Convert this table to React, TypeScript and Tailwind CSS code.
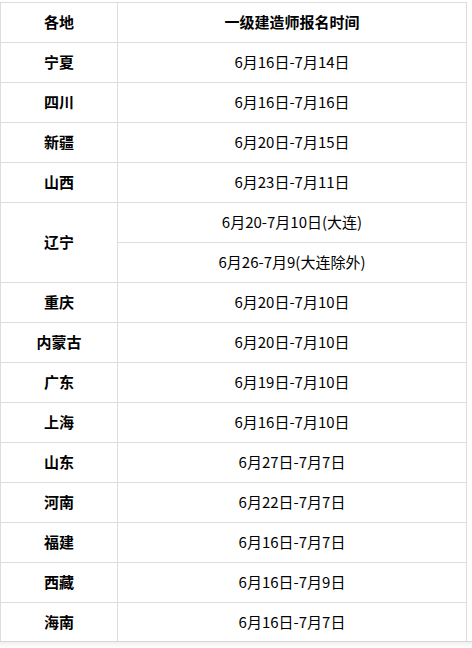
const rows: [string, string[]][] = [
  ['宁夏', ['6月16日-7月14日']],
  ['四川', ['6月16日-7月16日']],
  ['新疆', ['6月20日-7月15日']],
  ['山西', ['6月23日-7月11日']],
  ['辽宁', ['6月20-7月10日(大连)', '6月26-7月9(大连除外)']],
  ['重庆', ['6月20日-7月10日']],
  ['内蒙古', ['6月20日-7月10日']],
  ['广东', ['6月19日-7月10日']],
  ['上海', ['6月16日-7月10日']],
  ['山东', ['6月27日-7月7日']],
  ['河南', ['6月22日-7月7日']],
  ['福建', ['6月16日-7月7日']],
  ['西藏', ['6月16日-7月9日']],
  ['海南', ['6月16日-7月7日']],
];

const cell = 'border border-[#dddddd] text-center align-middle p-0';

export default function App() {
  return (
    <div
      className="w-[472px] h-[648px] overflow-hidden bg-white pt-[2px] text-[15px] text-black"
      style={{ fontFamily: '"Noto Sans CJK SC", "Noto Sans", sans-serif' }}
    >
      <div className="h-[639px] overflow-hidden">
        <table className="w-[467px] border-collapse table-fixed">
          <colgroup>
            <col className="w-[117px]" />
            <col />
          </colgroup>
          <tbody>
            <tr className="h-10">
              <td className={`${cell} font-bold`}>各地</td>
              <td className={`${cell} font-bold`}>一级建造师报名时间</td>
            </tr>
            {rows.map(([place, dates]) =>
              dates.map((d, i) => (
                <tr key={place + i} className="h-10">
                  {i === 0 && (
                    <td rowSpan={dates.length} className={`${cell} font-bold`}>
                      {place}
                    </td>
                  )}
                  <td className={cell}>{d}</td>
                </tr>
              ))
            )}
          </tbody>
        </table>
      </div>
      <div className="h-[7px] border-t border-[#d6d6d6] bg-gradient-to-b from-[#f0f0f0] to-white" />
    </div>
  );
}
